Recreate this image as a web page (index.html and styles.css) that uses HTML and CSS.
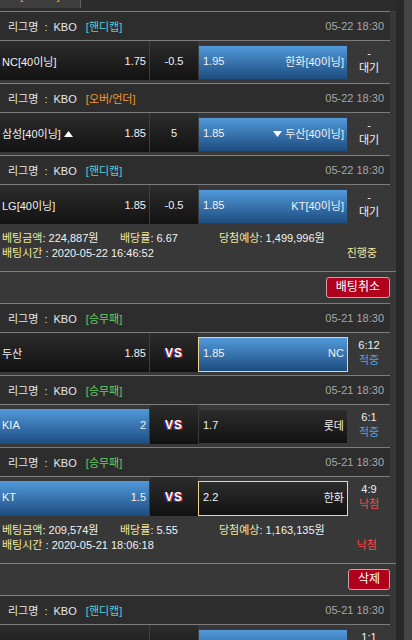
FILE: index.html
```html
<!DOCTYPE html>
<html lang="ko">
<head>
<meta charset="utf-8">
<title>배팅내역</title>
<link rel="stylesheet" href="styles.css">
</head>
<body>
<div class="page">
  <div class="main">
    <div class="tabs">
      <div class="tab on"><span>[스포츠]</span></div>
      <div class="tab off"><span>미니게임</span></div>
    </div>

    <section class="slip">
      <div class="game">
        <div class="ghead"><span class="league">리그명 : KBO <em class="tag cyan">[핸디캡]</em></span><span class="date">05-22 18:30</span></div>
        <div class="bet">
          <div class="pick l"><span>NC[40이닝]</span><span>1.75</span></div>
          <div class="mid">-0.5</div>
          <div class="pick r sel"><span>1.95</span><span>한화[40이닝]</span></div>
          <div class="status"><span>-</span><span>대기</span></div>
        </div>
      </div>
      <div class="game">
        <div class="ghead"><span class="league">리그명 : KBO <em class="tag orange">[오버/언더]</em></span><span class="date">05-22 18:30</span></div>
        <div class="bet">
          <div class="pick l"><span>삼성[40이닝] <svg class="tri" width="9" height="6" viewBox="0 0 9 6"><path d="M4.5 0L9 6H0Z" fill="#fff"/></svg></span><span>1.85</span></div>
          <div class="mid">5</div>
          <div class="pick r sel"><span>1.85</span><span><svg class="tri" width="9" height="6" viewBox="0 0 9 6"><path d="M0 0H9L4.5 6Z" fill="#fff"/></svg> 두산[40이닝]</span></div>
          <div class="status"><span>-</span><span>대기</span></div>
        </div>
      </div>
      <div class="game">
        <div class="ghead"><span class="league">리그명 : KBO <em class="tag cyan">[핸디캡]</em></span><span class="date">05-22 18:30</span></div>
        <div class="bet">
          <div class="pick l"><span>LG[40이닝]</span><span>1.85</span></div>
          <div class="mid">-0.5</div>
          <div class="pick r sel"><span>1.85</span><span>KT[40이닝]</span></div>
          <div class="status"><span>-</span><span>대기</span></div>
        </div>
      </div>
      <div class="info">
        <div class="irow">
          <span class="c1"><b>베팅금액</b>: 224,887원</span>
          <span class="c2"><b>배당률</b>: 6.67</span>
          <span class="c3"><b>당첨예상</b>: 1,499,996원</span>
        </div>
        <div class="irow">
          <span class="c1"><b>배팅시간</b> : 2020-05-22 16:46:52</span>
          <span class="state wait">진행중</span>
        </div>
      </div>
      <div class="actions"><button class="btn">배팅취소</button></div>
    </section>

    <section class="slip">
      <div class="game">
        <div class="ghead"><span class="league">리그명 : KBO <em class="tag green">[승무패]</em></span><span class="date">05-21 18:30</span></div>
        <div class="bet">
          <div class="pick l"><span>두산</span><span>1.85</span></div>
          <div class="mid"><span class="vs">VS</span></div>
          <div class="pick r sel hit"><span>1.85</span><span>NC</span></div>
          <div class="status"><span>6:12</span><span class="win">적중</span></div>
        </div>
      </div>
      <div class="game">
        <div class="ghead"><span class="league">리그명 : KBO <em class="tag green">[승무패]</em></span><span class="date">05-21 18:30</span></div>
        <div class="bet">
          <div class="pick l sel hit"><span>KIA</span><span>2</span></div>
          <div class="mid"><span class="vs">VS</span></div>
          <div class="pick r"><span>1.7</span><span>롯데</span></div>
          <div class="status"><span>6:1</span><span class="win">적중</span></div>
        </div>
      </div>
      <div class="game">
        <div class="ghead"><span class="league">리그명 : KBO <em class="tag green">[승무패]</em></span><span class="date">05-21 18:30</span></div>
        <div class="bet">
          <div class="pick l sel"><span>KT</span><span>1.5</span></div>
          <div class="mid"><span class="vs">VS</span></div>
          <div class="pick r hit"><span>2.2</span><span>한화</span></div>
          <div class="status"><span>4:9</span><span class="lose">낙첨</span></div>
        </div>
      </div>
      <div class="info">
        <div class="irow">
          <span class="c1"><b>베팅금액</b>: 209,574원</span>
          <span class="c2"><b>배당률</b>: 5.55</span>
          <span class="c3"><b>당첨예상</b>: 1,163,135원</span>
        </div>
        <div class="irow">
          <span class="c1"><b>배팅시간</b> : 2020-05-21 18:06:18</span>
          <span class="state lose">낙첨</span>
        </div>
      </div>
      <div class="actions"><button class="btn">삭제</button></div>
    </section>

    <section class="slip">
      <div class="game">
        <div class="ghead"><span class="league">리그명 : KBO <em class="tag cyan">[핸디캡]</em></span><span class="date">05-21 18:30</span></div>
        <div class="bet">
          <div class="pick l"><span>SK[40이닝]</span><span>1.85</span></div>
          <div class="mid">-0.5</div>
          <div class="pick r sel"><span>1.85</span><span>키움[40이닝]</span></div>
          <div class="status"><span>1:1</span><span class="win">적중</span></div>
        </div>
      </div>
    </section>
  </div>
  <div class="scroll"><div class="track"></div><div class="thumb"></div></div>
</div>
</body>
</html>
```

FILE: styles.css
```css
* { box-sizing: border-box; margin: 0; padding: 0; }

html, body { background: #383838; }

body {
  width: 412px;
  height: 640px;
  overflow: hidden;
  font-family: "Liberation Sans", "Noto Sans CJK KR", sans-serif;
  font-size: 11px;
  color: #eeeeee;
}

.page { display: flex; height: 640px; }
.main { width: 396px; flex: none; }

.scroll { width: 16px; flex: none; display: flex; }
.scroll .track { width: 8px; background: #282828; }
.scroll .thumb { width: 8px; background: #454545; }

/* top tabs (cut off) */
.tabs {
  width: 396px;
  height: 11px;
  display: flex;
  align-items: flex-start;
  background: #2c2c2c;
  overflow: hidden;
}
.tab { height: 8px; overflow: hidden; }
.tab span { display: block; line-height: 14px; margin-top: -12px; font-size: 12px; }
.tab.on { width: 81px; background: #3d3d3d; border-right: 1px solid #5e5e5e; }
.tab.on span { padding-left: 20px; color: #f0a030; }
.tab.off span { padding-left: 228px; color: #8a8a8a; }

/* game header */
.ghead {
  width: 390px;
  height: 30px;
  display: flex;
  align-items: center;
  justify-content: space-between;
  padding: 0 6px 0 8px;
  background: #2d2d2d;
  border-top: 1px solid #7c7c7c;
  border-bottom: 1px solid #7c7c7c;
}
.league { color: #e8e8e8; word-spacing: 3px; }
.tag { font-style: normal; margin-left: 3px; }
.cyan { color: #4fd3dc; }
.orange { color: #f39b30; }
.green { color: #60cf5f; }
.date { color: #a8a8a8; }

/* bet row */
.bet {
  width: 390px;
  height: 39px;
  margin-bottom: 3px;
  display: flex;
  align-items: flex-start;
}
.pick {
  width: 150px;
  height: 39px;
  flex: none;
  display: flex;
  align-items: center;
  justify-content: space-between;
  background: linear-gradient(#2c2c2c, #121212);
  color: #f2f2f2;
}
.pick.l { padding: 0 3px 0 2px; border-right: 1px solid #3e3e3e; }
.pick.r { margin-top: 4px; height: 35px; padding: 0 3px 4px 4px; border: 1px solid #3a3a3a; }
.pick.sel { background: linear-gradient(#5199da, #1d4d80); }
.pick.l.sel { margin-top: 4px; height: 35px; padding: 0 3px 4px 2px; border: 0; margin-right: 1px; width: 149px; }
.pick.hit { border: 1px solid #f0d68a; }
.pick.l.hit { padding-left: 2px; }

.tri { vertical-align: 1px; }

.mid {
  width: 48px;
  height: 39px;
  flex: none;
  display: flex;
  align-items: center;
  justify-content: center;
  background: linear-gradient(#2c2c2c, #121212);
  color: #f2f2f2;
}
.vs {
  font-family: "Liberation Sans", sans-serif;
  font-weight: bold;
  font-size: 12px;
  letter-spacing: 1px;
  color: #ffffff;
  text-shadow: 1px 1px 0 #d01a1a, -1px 1px 0 #2a3cd0;
}

.status {
  width: 42px;
  height: 39px;
  flex: none;
  display: flex;
  flex-direction: column;
  align-items: center;
  justify-content: center;
  line-height: 15px;
  color: #f2f2f2;
}
.win { color: #4fa3f0; }
.lose { color: #ff4848; }

/* bet summary */
.info {
  width: 396px;
  height: 45px;
  padding: 4px 0 0 2px;
  border-bottom: 1px solid #7c7c7c;
  color: #f2f2f2;
}
.irow { display: flex; align-items: center; height: 15px; line-height: 15px; }
.irow b { font-weight: normal; color: #f2e89e; }
.c1 { width: 118px; flex: none; white-space: nowrap; }
.c2 { width: 99px; flex: none; white-space: nowrap; }
.c3 { white-space: nowrap; }
.state { margin-left: auto; margin-right: 19px; }
.state.wait { color: #f2e89e; }

.actions {
  width: 396px;
  height: 31px;
  display: flex;
  justify-content: flex-end;
  align-items: flex-start;
  padding: 5px 6px 0 0;
}
.btn {
  height: 21px;
  padding: 0 9px;
  background: #b0001c;
  border: 1px solid #c9a3a9;
  border-radius: 3px;
  color: #ffffff;
  font-family: "Liberation Sans", "Noto Sans CJK KR", sans-serif;
  font-size: 12px;
  line-height: 19px;
}
```
